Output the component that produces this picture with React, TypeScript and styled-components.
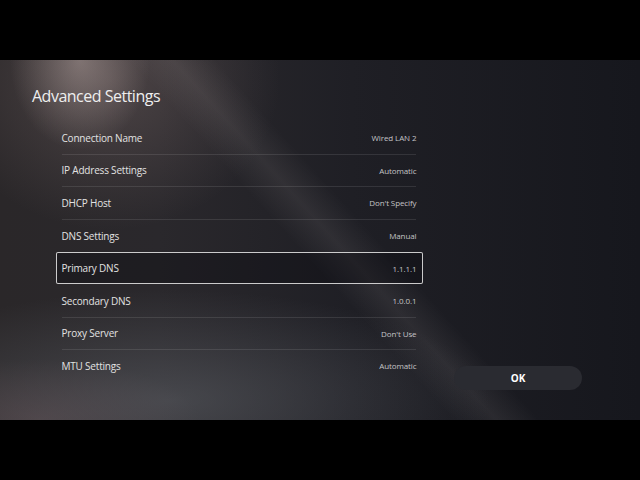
import styled, { createGlobalStyle } from 'styled-components';

const GlobalStyle = createGlobalStyle`
  html, body {
    margin: 0;
    padding: 0;
    background: #000000;
  }
  body {
    font-family: 'Open Sans', 'Noto Sans', sans-serif;
    -webkit-font-smoothing: antialiased;
  }
`;

const Screen = styled.div`
  width: 640px;
  height: 480px;
  display: flex;
  flex-direction: column;
  background: #000000;
  overflow: hidden;
`;

const Letterbox = styled.div`
  height: 60px;
  flex-shrink: 0;
  background: #000000;
`;

// soft light spill from the top left, a diagonal ray and a grey glow low on the left
const Stage = styled.div`
  height: 360px;
  flex-shrink: 0;
  display: flex;
  flex-direction: column;
  padding: 0 58px 30px 32px;
  box-sizing: border-box;
  background:
    linear-gradient(48deg, transparent 47%, rgba(255, 240, 235, 0.07) 51.5%, transparent 56%),
    radial-gradient(ellipse 70px 90px at 80px 0px, rgba(215, 195, 190, 0.4), transparent),
    radial-gradient(ellipse 170px 150px at 110px 20px, rgba(140, 120, 118, 0.35), transparent),
    radial-gradient(ellipse 320px 110px at 170px 340px, rgba(95, 98, 104, 0.55), transparent),
    radial-gradient(ellipse 160px 60px at 40px 360px, rgba(110, 85, 90, 0.45), transparent),
    linear-gradient(90deg, #2a2729 0%, #2a282c 25%, #1f1f25 55%, #16171d 100%);
`;

const Title = styled.h1`
  margin: 24px 0 0;
  font-size: 16px;
  font-weight: 400;
  line-height: 24px;
  color: #eeeeee;
  letter-spacing: -0.5px;
`;

const Body = styled.div`
  flex: 1;
  display: flex;
  align-items: flex-end;
  justify-content: space-between;
  padding-left: 24px;
`;

const List = styled.div`
  align-self: flex-start;
  width: 367px;
  margin-top: 14px;
  display: flex;
  flex-direction: column;
`;

const Row = styled.div<{ $focused: boolean }>`
  height: 31.6px;
  display: flex;
  align-items: center;
  justify-content: space-between;
  box-sizing: border-box;
  border-radius: 2px;
  border: 1.5px solid ${(p) => (p.$focused ? 'rgba(235, 235, 235, 0.85)' : 'transparent')};
  background: ${(p) => (p.$focused ? 'rgba(10, 10, 14, 0.35)' : 'transparent')};
  padding: 0 5.5px 0 4.5px;
`;

const Label = styled.span`
  font-size: 10px;
  color: #e2e2e2;
  letter-spacing: -0.2px;
`;

const Value = styled.span`
  font-size: 8px;
  color: #c4c4c6;
  letter-spacing: -0.1px;
`;

const Divider = styled.div<{ $faded: boolean }>`
  height: 1px;
  margin: 0 7px 0 6px;
  background: ${(p) => (p.$faded ? 'transparent' : 'rgba(255, 255, 255, 0.1)')};
`;

const OkButton = styled.button`
  width: 128px;
  height: 24px;
  border: none;
  border-radius: 12px;
  background: #2a2b31;
  color: #ffffff;
  font-family: 'Open Sans', 'Noto Sans', sans-serif;
  font-size: 10px;
  font-weight: 700;
  cursor: pointer;
`;

const settings = [
  { label: 'Connection Name', value: 'Wired LAN 2' },
  { label: 'IP Address Settings', value: 'Automatic' },
  { label: 'DHCP Host', value: "Don't Specify" },
  { label: 'DNS Settings', value: 'Manual' },
  { label: 'Primary DNS', value: '1.1.1.1' },
  { label: 'Secondary DNS', value: '1.0.0.1' },
  { label: 'Proxy Server', value: "Don't Use" },
  { label: 'MTU Settings', value: 'Automatic' },
];

const focusedIndex = 4;

const App = () => {
  return (
    <Screen>
      <GlobalStyle />
      <Letterbox />
      <Stage>
        <Title>Advanced Settings</Title>
        <Body>
          <List>
            {settings.map((item, i) => (
              <div key={item.label}>
                {i > 0 && (
                  <Divider $faded={i === focusedIndex || i - 1 === focusedIndex} />
                )}
                <Row $focused={i === focusedIndex}>
                  <Label>{item.label}</Label>
                  <Value>{item.value}</Value>
                </Row>
              </div>
            ))}
          </List>
          <OkButton>OK</OkButton>
        </Body>
      </Stage>
      <Letterbox />
    </Screen>
  );
};

export default App;
